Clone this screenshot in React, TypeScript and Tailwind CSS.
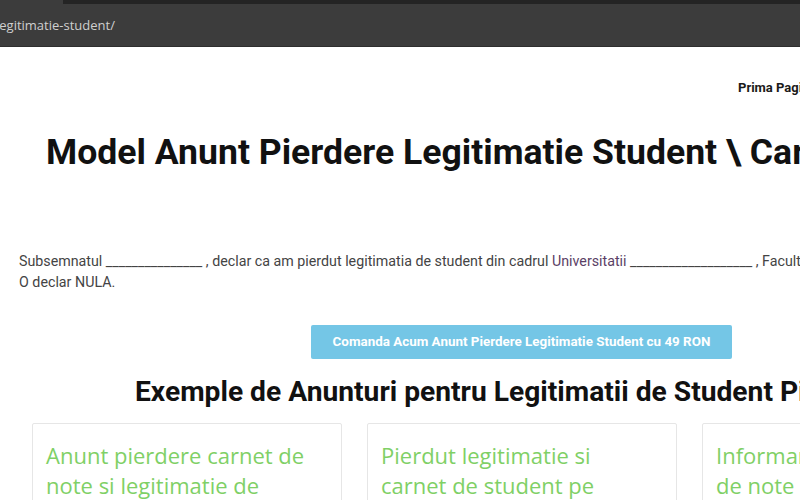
import React from "react";

const roboto = { fontFamily: "Roboto, 'Liberation Sans', sans-serif" };
const openSans = { fontFamily: "'Open Sans', 'Noto Sans', sans-serif" };

const cards = [
  "Anunt pierdere carnet de note si legitimatie de student",
  "Pierdut legitimatie si carnet de student pe numele",
  "Informare pierdere carnet de note student",
];

export default function App() {
  return (
    <div className="w-[800px] h-[500px] overflow-hidden bg-white relative">
      {/* browser address bar */}
      <div className="h-[47px] bg-[#3c3c3c] flex flex-col border-b border-[#2e2e2e]">
        <div className="h-[4px] flex">
          <div className="w-[63px] bg-[#3c3c3c]" />
          <div className="flex-1 bg-[#242424]" />
        </div>
        <div className="flex-1 flex items-center">
          <span
            className="text-[13px] text-[#cfcfcf] whitespace-nowrap -ml-[4px] leading-none"
            style={openSans}
          >
            legitimatie-student/
          </span>
        </div>
      </div>

      <div className="w-[1300px]" style={roboto}>
        {/* nav */}
        <div className="pl-[738px] pt-[28px] h-[84px]">
          <span className="text-[13px] font-bold text-[#1a1a1a]">Prima Pagina</span>
        </div>

        {/* title */}
        <h1 className="pl-[46px] text-[35.6px] font-bold text-[#111] whitespace-nowrap leading-[42px] h-[42px]">
          Model Anunt Pierdere Legitimatie Student \ Carnet de Student
        </h1>

        {/* statement */}
        <div className="pl-[19px] pt-[78px] text-[14.25px] text-[#444] leading-[21px]">
          <p className="whitespace-nowrap">
            Subsemnatul _______________ , declar ca am pierdut legitimatia de student din cadrul{" "}
            <span className="text-[#5b3f66]">Universitatii</span> ___________________ , Facultatea
            ___________________ .
          </p>
          <p>O declar NULA.</p>
        </div>

        {/* order button */}
        <div className="pl-[311px] pt-[32px]">
          <button className="w-[421px] h-[34px] rounded-[2px] bg-[#74c6e6] text-white text-[13.4px] font-bold">
            Comanda Acum Anunt Pierdere Legitimatie Student cu 49 RON
          </button>
        </div>

        {/* examples heading */}
        <h2 className="pl-[135px] pt-[15px] text-[28.2px] font-bold text-[#111] whitespace-nowrap leading-[36px]">
          Exemple de Anunturi pentru Legitimatii de Student Pierdute
        </h2>

        {/* example cards */}
        <div className="pl-[32px] pt-[13px] flex gap-[25px]">
          {cards.map((c) => (
            <div
              key={c}
              className="w-[310px] h-[160px] border border-[#e6e6e6] rounded-[2px] pl-[13px] pr-[18px] pt-[16px]"
            >
              <p className="text-[22px] leading-[30px] text-[#7fd066]" style={openSans}>
                {c}
              </p>
            </div>
          ))}
        </div>
      </div>
    </div>
  );
}
